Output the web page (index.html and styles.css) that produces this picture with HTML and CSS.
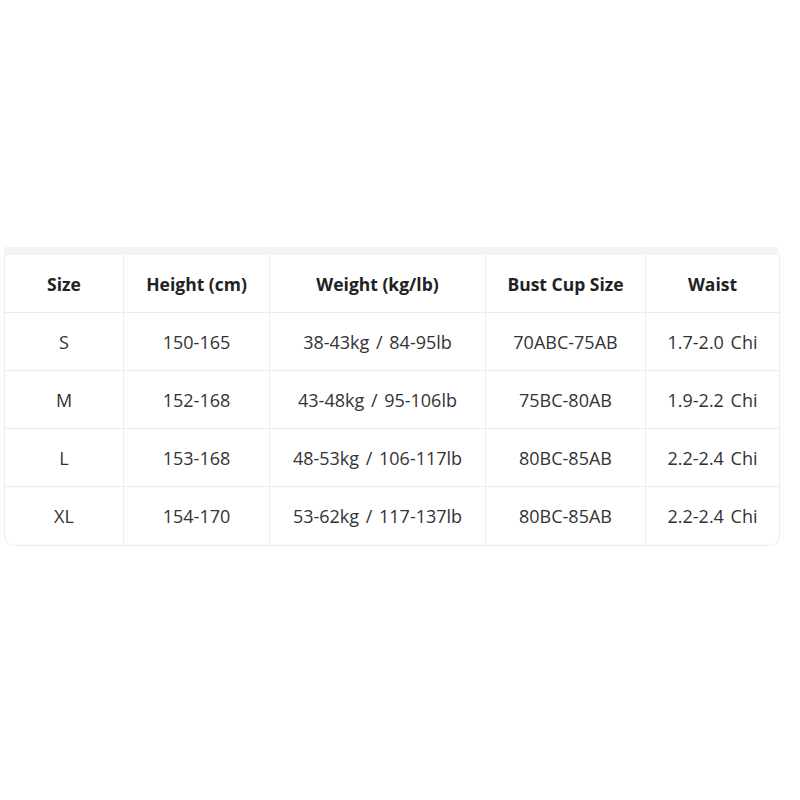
FILE: index.html
```html
<!DOCTYPE html>
<html>
<head>
<meta charset="utf-8">
<link rel="stylesheet" href="styles.css">
</head>
<body>
<div class="wrap">
  <div class="strip"></div>
  <table class="chart">
    <colgroup>
      <col class="c1"><col class="c2"><col class="c3"><col class="c4"><col class="c5">
    </colgroup>
    <thead>
      <tr><th>Size</th><th>Height (cm)</th><th>Weight (kg/lb)</th><th>Bust Cup Size</th><th>Waist</th></tr>
    </thead>
    <tbody>
      <tr><td>S</td><td>150-165</td><td>38-43kg / 84-95lb</td><td>70ABC-75AB</td><td>1.7-2.0 Chi</td></tr>
      <tr><td>M</td><td>152-168</td><td>43-48kg / 95-106lb</td><td>75BC-80AB</td><td>1.9-2.2 Chi</td></tr>
      <tr><td>L</td><td>153-168</td><td>48-53kg / 106-117lb</td><td>80BC-85AB</td><td>2.2-2.4 Chi</td></tr>
      <tr><td>XL</td><td>154-170</td><td>53-62kg / 117-137lb</td><td>80BC-85AB</td><td>2.2-2.4 Chi</td></tr>
    </tbody>
  </table>
</div>
</body>
</html>
```

FILE: styles.css
```css
html, body {
  margin: 0;
  padding: 0;
  background: #ffffff;
}
.wrap {
  padding-top: 247px;
  padding-left: 4px;
  width: 774px;
}
.strip {
  height: 8px;
  background: #f3f3f3;
}
.chart {
  width: 774px;
  border-collapse: separate;
  border-spacing: 0;
  table-layout: fixed;
  font-family: "Open Sans", "Noto Sans", sans-serif;
  font-size: 17.5px;
  color: #333333;
  border: 1px solid #ececec;
  border-top: none;
  border-radius: 0 0 10px 10px;
  box-sizing: border-box;
}
.c1 { width: 119px; }
.c2 { width: 146px; }
.c3 { width: 216px; }
.c4 { width: 160px; }
.c5 { width: 133px; }
.chart th, .chart td {
  height: 58px;
  padding: 0;
  text-align: center;
  vertical-align: middle;
  border-right: 1px solid #ececec;
  border-bottom: 1px solid #ececec;
  box-sizing: border-box;
}
.chart th:last-child, .chart td:last-child {
  border-right: none;
}
.chart tbody tr:last-child td {
  border-bottom: none;
}
.chart th {
  font-weight: 700;
  color: #222222;
}
.chart td {
  font-size: 18px;
  word-spacing: 2px;
}
```
